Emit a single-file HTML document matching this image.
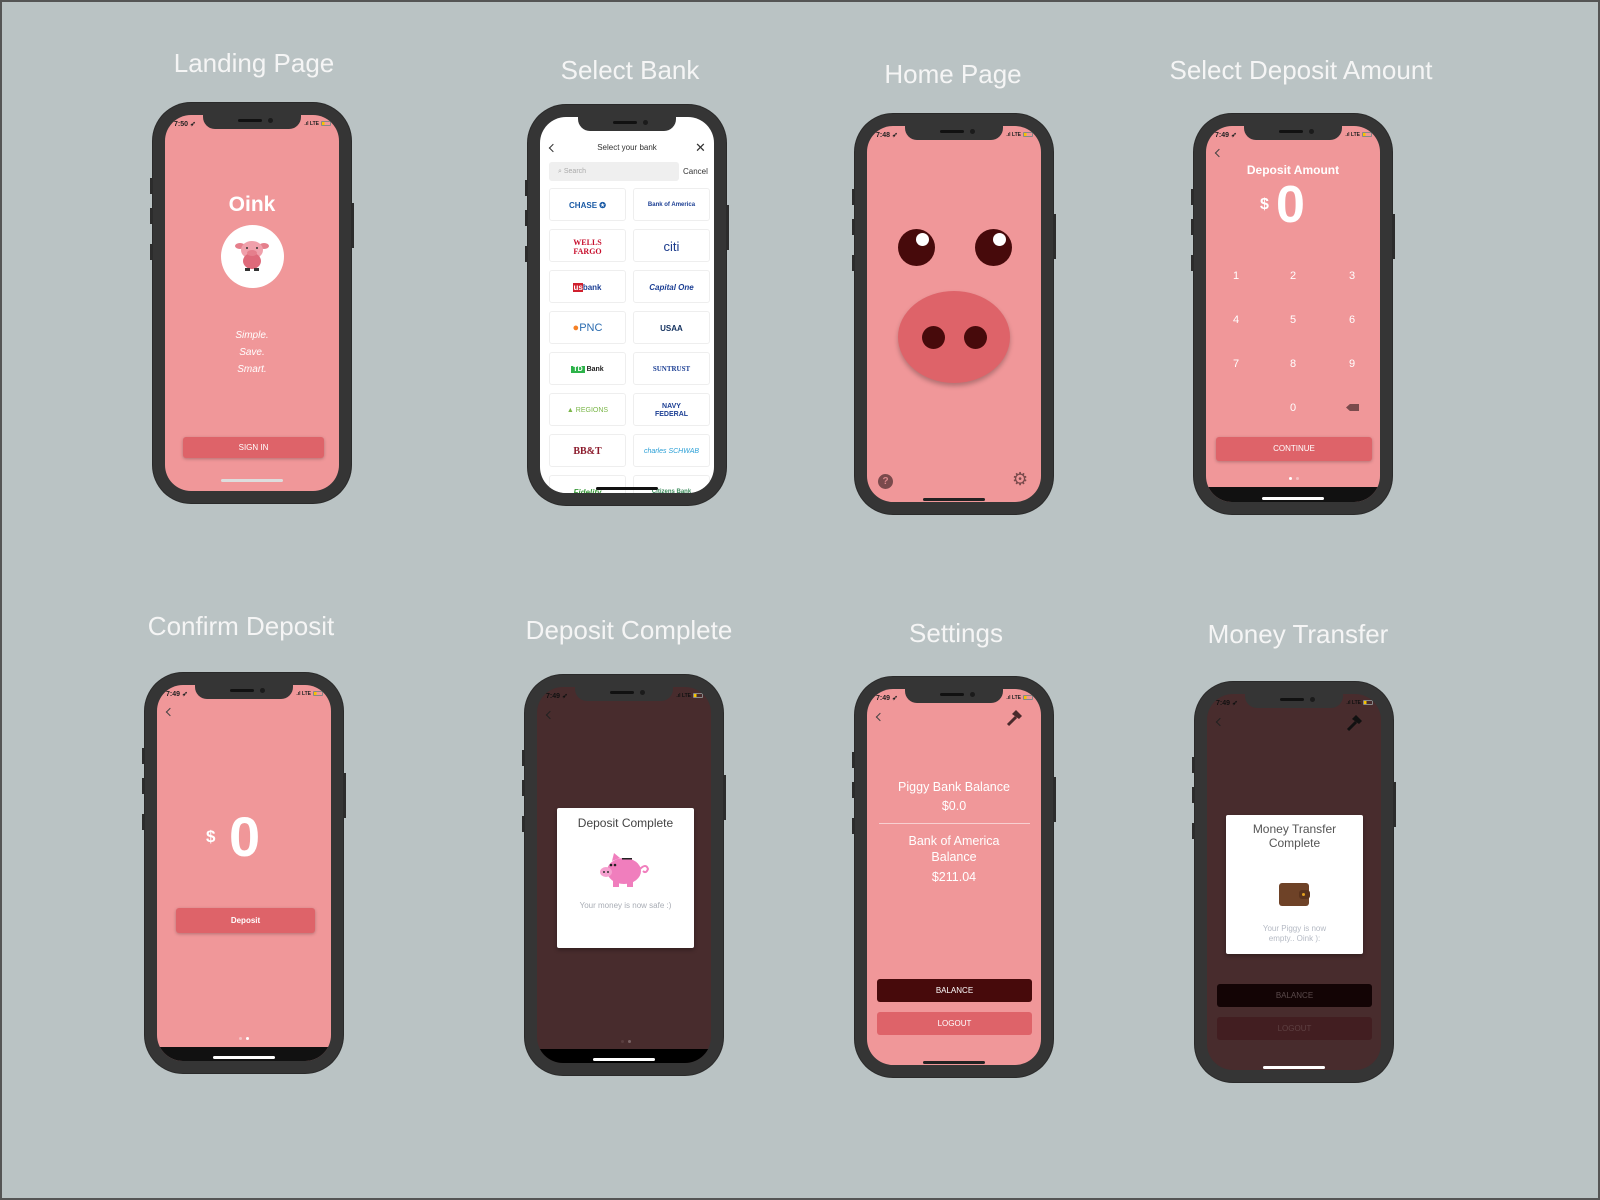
<!DOCTYPE html>
<html><head><meta charset="utf-8"><style>
*{margin:0;padding:0;box-sizing:border-box}
body{width:1600px;height:1200px;background:#bac3c4;position:relative;overflow:hidden;font-family:"Liberation Sans",sans-serif;border:2px solid #555}
.t{position:absolute;color:#f5f5f5;font-size:26px;transform:translateX(-50%);white-space:nowrap;line-height:1}
.ph{position:absolute;width:198px;height:400px;border-radius:38px;background:#353535;box-shadow:0 0 0 1px #2a2a2a}
.ph:before{content:"";position:absolute;left:-3px;top:75px;width:3px;height:16px;background:#2c2c2c;box-shadow:0 30px 0 #2c2c2c,0 66px 0 #2c2c2c}
.ph:after{content:"";position:absolute;right:-3px;top:100px;width:3px;height:45px;background:#2c2c2c}
.sc{position:absolute;left:12px;top:12px;width:174px;height:376px;border-radius:26px;overflow:hidden;background:#f09799}
.notch{position:absolute;left:38px;top:0;width:98px;height:14px;background:#353535;border-radius:0 0 12px 12px;z-index:5}
.notch:before{content:"";position:absolute;left:35px;top:4px;width:24px;height:3px;border-radius:2px;background:#111}
.notch:after{content:"";position:absolute;left:65px;top:3px;width:5px;height:5px;border-radius:50%;background:#1b1b1b}
.time{position:absolute;left:9px;top:5px;font-size:7px;font-weight:bold;color:#222}
.stat{position:absolute;right:8px;top:6px;font-size:5px;font-weight:bold;color:#222}
.stat i{display:inline-block;width:10px;height:5px;border:1px solid #888;border-radius:1px;vertical-align:middle;margin-left:2px;background:linear-gradient(90deg,#f5c400 30%,transparent 30%)}
.a{position:absolute}
.c{position:absolute;left:0;width:100%;text-align:center;color:#fff}
.btn{position:absolute;background:#de6369;color:#fff;font-size:8px;text-align:center;border-radius:3px;box-shadow:0 1px 3px rgba(0,0,0,.25)}
.hi{position:absolute;left:56px;width:62px;height:3px;border-radius:2px}
.chev{position:absolute;width:6px;height:6px;border-left:1px solid #444;border-bottom:1px solid #444;transform:rotate(45deg)}
.card{position:absolute;width:77px;height:33px;border:1px solid #eee;border-radius:3px;background:#fff;text-align:center;font-size:8px;line-height:33px;font-weight:bold}
.key{position:absolute;width:20px;margin-left:-10px;text-align:center;color:#fff;font-size:11px}
.pop{position:absolute;background:#fff;border-radius:2px;box-shadow:0 2px 4px rgba(0,0,0,.3)}
</style></head><body>

<div class="t" style="left:252px;top:48px">Landing Page</div>
<div class="t" style="left:628px;top:55px">Select Bank</div>
<div class="t" style="left:951px;top:59px">Home Page</div>
<div class="t" style="left:1299px;top:55px">Select Deposit Amount</div>
<div class="t" style="left:239px;top:611px">Confirm Deposit</div>
<div class="t" style="left:627px;top:615px">Deposit Complete</div>
<div class="t" style="left:954px;top:618px">Settings</div>
<div class="t" style="left:1296px;top:619px">Money Transfer</div>

<!-- P1 Landing -->
<div class="ph" style="left:151px;top:101px"><div class="sc">
<div class="notch"></div><div class="time">7:50 ➶</div><div class="stat">.ıl LTE<i></i></div>
<div class="c" style="top:78px;font-size:21px;font-weight:bold">Oink</div>
<div class="a" style="left:56px;top:110px;width:63px;height:63px;border-radius:50%;background:#fff"></div>
<svg class="a" style="left:68px;top:123px" width="38" height="36" viewBox="0 0 38 36"><ellipse cx="7" cy="8" rx="5" ry="3" fill="#e57f8c"/><ellipse cx="31" cy="8" rx="5" ry="3" fill="#e57f8c"/><ellipse cx="19" cy="12" rx="11" ry="9" fill="#f0a0ab"/><ellipse cx="19" cy="23" rx="9" ry="8" fill="#de6a7a"/><ellipse cx="19" cy="15" rx="5" ry="3" fill="#e57f8c"/><circle cx="14" cy="10" r="1" fill="#333"/><circle cx="24" cy="10" r="1" fill="#333"/><rect x="12" y="30" width="5" height="3" fill="#333"/><rect x="21" y="30" width="5" height="3" fill="#333"/></svg>
<div class="c" style="top:212px;font-size:10px;font-style:italic;line-height:17px">Simple.<br>Save.<br>Smart.</div>
<div class="btn" style="left:18px;top:322px;width:141px;height:21px;line-height:21px">SIGN IN</div>
<div class="hi" style="top:364px;background:#ddd"></div>
</div></div>

<!-- P2 Select bank -->
<div class="ph" style="left:526px;top:103px"><div class="sc" style="background:#fff">
<div class="notch"></div>
<div class="chev" style="left:10px;top:28px;border-color:#333"></div>
<div class="c" style="top:26px;font-size:8px;color:#333">Select your bank</div>
<div class="a" style="left:155px;top:23px;font-size:13px;color:#333">✕</div>
<div class="a" style="left:9px;top:45px;width:130px;height:19px;background:#efefef;border-radius:3px;font-size:7px;color:#aaa;line-height:19px;padding-left:9px">⌕ Search</div>
<div class="a" style="left:143px;top:50px;font-size:8px;color:#333">Cancel</div>
<div class="card" style="left:9px;top:71px;color:#1a5aa5">CHASE ✪</div>
<div class="card" style="left:93px;top:71px;color:#1c3f94;font-size:6px">Bank of America</div>
<div class="card" style="left:9px;top:112px;color:#c8102e;line-height:9px;padding-top:8px;font-family:'Liberation Serif',serif">WELLS<br>FARGO</div>
<div class="card" style="left:93px;top:112px;color:#1b3b8c;font-size:13px;font-weight:normal">citi</div>
<div class="card" style="left:9px;top:153px;color:#1c3f94"><span style="background:#d0202e;color:#fff">us</span>bank</div>
<div class="card" style="left:93px;top:153px;color:#1c3f94;font-style:italic">Capital One</div>
<div class="card" style="left:9px;top:194px;color:#2b6cb0;font-size:11px;font-weight:normal"><span style="color:#f58025">●</span>PNC</div>
<div class="card" style="left:93px;top:194px;color:#12305e">USAA</div>
<div class="card" style="left:9px;top:235px;color:#222;font-size:7px"><span style="background:#2db34a;color:#fff;padding:0 2px">TD</span> Bank</div>
<div class="card" style="left:93px;top:235px;color:#1c3f94;font-family:'Liberation Serif',serif;font-size:7px">SUNTRUST</div>
<div class="card" style="left:9px;top:276px;color:#7ab648;font-size:7px;font-weight:normal">▲ REGIONS</div>
<div class="card" style="left:93px;top:276px;color:#1c3f94;font-size:7px;line-height:8px;padding-top:9px">NAVY<br>FEDERAL</div>
<div class="card" style="left:9px;top:317px;color:#8b1a2b;font-family:'Liberation Serif',serif;font-size:10px">BB&amp;T</div>
<div class="card" style="left:93px;top:317px;color:#2a9fd6;font-style:italic;font-weight:normal;font-size:7px">charles SCHWAB</div>
<div class="card" style="left:9px;top:358px;color:#3a9a3a;font-style:italic">Fidelity</div>
<div class="card" style="left:93px;top:358px;color:#3a8a5a;font-size:6px">Citizens Bank</div>
<div class="hi" style="top:370px;background:#111"></div>
</div></div>

<!-- P3 Home -->
<div class="ph" style="left:853px;top:112px"><div class="sc">
<div class="notch"></div><div class="time">7:48 ➶</div><div class="stat">.ıl LTE<i></i></div>
<div class="a" style="left:31px;top:103px;width:37px;height:37px;border-radius:50%;background:#470a0b"></div>
<div class="a" style="left:49px;top:107px;width:13px;height:13px;border-radius:50%;background:#fff"></div>
<div class="a" style="left:108px;top:103px;width:37px;height:37px;border-radius:50%;background:#470a0b"></div>
<div class="a" style="left:126px;top:107px;width:13px;height:13px;border-radius:50%;background:#fff"></div>
<div class="a" style="left:31px;top:165px;width:112px;height:92px;border-radius:50%;background:#de6369;box-shadow:0 3px 5px rgba(0,0,0,.25)"></div>
<div class="a" style="left:55px;top:200px;width:23px;height:23px;border-radius:50%;background:#470a0b"></div>
<div class="a" style="left:97px;top:200px;width:23px;height:23px;border-radius:50%;background:#470a0b"></div>
<div class="a" style="left:11px;top:348px;width:15px;height:15px;border-radius:50%;background:#7a4a4c;color:#d9888c;font-size:10px;text-align:center;line-height:15px;font-weight:bold">?</div>
<div class="a" style="left:145px;top:343px;font-size:18px;color:#7a4a4c">⚙</div>
<div class="hi" style="top:372px;background:#222"></div>
</div></div>

<!-- P4 Deposit amount -->
<div class="ph" style="left:1192px;top:112px"><div class="sc">
<div class="notch"></div><div class="time">7:49 ➶</div><div class="stat">.ıl LTE<i></i></div>
<div class="chev" style="left:10px;top:24px"></div>
<div class="c" style="top:37px;font-size:12px;font-weight:bold">Deposit Amount</div>
<div class="a" style="left:54px;top:70px;font-size:16px;color:#fff;font-weight:bold">$</div>
<div class="a" style="left:70px;top:53px;font-size:52px;color:#fff;font-weight:bold;line-height:1">0</div>
<div class="key" style="left:30px;top:144px">1</div><div class="key" style="left:87px;top:144px">2</div><div class="key" style="left:146px;top:144px">3</div>
<div class="key" style="left:30px;top:188px">4</div><div class="key" style="left:87px;top:188px">5</div><div class="key" style="left:146px;top:188px">6</div>
<div class="key" style="left:30px;top:232px">7</div><div class="key" style="left:87px;top:232px">8</div><div class="key" style="left:146px;top:232px">9</div>
<div class="key" style="left:87px;top:276px">0</div>
<div class="a" style="left:140px;top:278px;width:13px;height:7px;background:#7a4a4c;clip-path:polygon(30% 0,100% 0,100% 100%,30% 100%,0 50%)"></div>
<div class="btn" style="left:10px;top:311px;width:156px;height:24px;line-height:24px">CONTINUE</div>
<div class="a" style="left:83px;top:351px;width:3px;height:3px;border-radius:50%;background:#fff"></div>
<div class="a" style="left:90px;top:351px;width:3px;height:3px;border-radius:50%;background:#f5c0c2"></div>
<div class="a" style="left:0;top:361px;width:174px;height:15px;background:#111"></div>
<div class="hi" style="top:371px;background:#fff"></div>
</div></div>

<!-- P5 Confirm -->
<div class="ph" style="left:143px;top:671px"><div class="sc">
<div class="notch"></div><div class="time">7:49 ➶</div><div class="stat">.ıl LTE<i></i></div>
<div class="chev" style="left:10px;top:24px"></div>
<div class="a" style="left:49px;top:142px;font-size:17px;color:#fff;font-weight:bold">$</div>
<div class="a" style="left:72px;top:124px;font-size:56px;color:#fff;font-weight:bold;line-height:1">0</div>
<div class="btn" style="left:19px;top:223px;width:139px;height:25px;line-height:25px;font-weight:bold">Deposit</div>
<div class="a" style="left:82px;top:352px;width:3px;height:3px;border-radius:50%;background:#f5c0c2"></div>
<div class="a" style="left:89px;top:352px;width:3px;height:3px;border-radius:50%;background:#fff"></div>
<div class="a" style="left:0;top:362px;width:174px;height:14px;background:#111"></div>
<div class="hi" style="top:371px;background:#fff"></div>
</div></div>

<!-- P6 Deposit complete -->
<div class="ph" style="left:523px;top:673px"><div class="sc" style="background:#482c2d">
<div class="notch"></div><div class="time" style="color:#111">7:49 ➶</div><div class="stat" style="color:#111">.ıl LTE<i></i></div>
<div class="chev" style="left:10px;top:25px;border-color:#222"></div>
<div class="pop" style="left:20px;top:121px;width:137px;height:140px">
<div class="c" style="top:8px;font-size:12px;color:#444">Deposit Complete</div>
<svg class="a" style="left:43px;top:43px" width="52" height="38" viewBox="0 0 52 38"><ellipse cx="24" cy="20" rx="17" ry="13" fill="#f07ebd"/><path d="M12 10 L14 2 L20 7Z" fill="#f07ebd"/><ellipse cx="6" cy="21" rx="6" ry="5" fill="#f5a0cf"/><circle cx="4" cy="21" r="1" fill="#333"/><circle cx="8" cy="21" r="1" fill="#333"/><circle cx="11" cy="14" r="1.3" fill="#222"/><circle cx="15" cy="14" r="1.3" fill="#222"/><rect x="22" y="7" width="10" height="1.5" fill="#222"/><rect x="13" y="28" width="6" height="8" fill="#f07ebd"/><rect x="27" y="28" width="6" height="8" fill="#f07ebd"/><path d="M40 18 q6 -6 8 0 q-2 5 -5 2" stroke="#f07ebd" stroke-width="2" fill="none"/></svg>
<div class="c" style="top:93px;font-size:8px;color:#a9adb5">Your money is now safe :)</div>
</div>
<div class="a" style="left:84px;top:353px;width:3px;height:3px;border-radius:50%;background:#5a3e3f"></div>
<div class="a" style="left:91px;top:353px;width:3px;height:3px;border-radius:50%;background:#7a6465"></div>
<div class="a" style="left:0;top:362px;width:174px;height:14px;background:#000"></div>
<div class="hi" style="top:371px;background:#fff"></div>
</div></div>

<!-- P7 Settings -->
<div class="ph" style="left:853px;top:675px"><div class="sc">
<div class="notch"></div><div class="time">7:49 ➶</div><div class="stat">.ıl LTE<i></i></div>
<div class="chev" style="left:10px;top:25px"></div>
<svg class="a" style="left:139px;top:20px" width="18" height="18" viewBox="0 0 18 18"><path d="M2 16 L10 8" stroke="#4a2a2c" stroke-width="3"/><path d="M6 5 L10 1 L16 7 L13 10 Z" fill="#4a2a2c"/></svg>
<div class="c" style="top:91px;font-size:12.5px">Piggy Bank Balance</div>
<div class="c" style="top:110px;font-size:12.5px">$0.0</div>
<div class="a" style="left:12px;top:134px;width:151px;height:1px;background:#f8d0d1"></div>
<div class="c" style="top:144px;font-size:12.5px;line-height:16px">Bank of America<br>Balance</div>
<div class="c" style="top:181px;font-size:12.5px">$211.04</div>
<div class="btn" style="left:10px;top:290px;width:155px;height:23px;line-height:23px;background:#470a0b;box-shadow:none">BALANCE</div>
<div class="btn" style="left:10px;top:323px;width:155px;height:23px;line-height:23px;box-shadow:none">LOGOUT</div>
<div class="hi" style="top:372px;background:#222"></div>
</div></div>

<!-- P8 Money transfer -->
<div class="ph" style="left:1193px;top:680px"><div class="sc" style="background:#482c2d">
<div class="notch"></div><div class="time" style="color:#111">7:49 ➶</div><div class="stat" style="color:#111">.ıl LTE<i></i></div>
<div class="chev" style="left:10px;top:25px;border-color:#222"></div>
<svg class="a" style="left:139px;top:20px" width="18" height="18" viewBox="0 0 18 18"><path d="M2 16 L10 8" stroke="#111" stroke-width="3"/><path d="M6 5 L10 1 L16 7 L13 10 Z" fill="#111"/></svg>
<div class="pop" style="left:19px;top:121px;width:137px;height:139px">
<div class="c" style="top:7px;font-size:12px;color:#555;line-height:14px">Money Transfer<br>Complete</div>
<div class="a" style="left:53px;top:68px;width:30px;height:23px;background:#6e4227;border-radius:3px"></div>
<div class="a" style="left:73px;top:75px;width:11px;height:9px;background:#5a331d;border-radius:3px"></div>
<div class="a" style="left:76px;top:78px;width:3px;height:3px;border-radius:50%;background:#e0a020"></div>
<div class="c" style="top:109px;font-size:8px;color:#b5bac4;line-height:10px">Your Piggy is now<br>empty.. Oink ):</div>
</div>
<div class="btn" style="left:10px;top:290px;width:155px;height:23px;line-height:23px;background:#130405;color:#5a4a4b;box-shadow:none">BALANCE</div>
<div class="btn" style="left:10px;top:323px;width:155px;height:23px;line-height:23px;background:#421e21;color:#5e4042;box-shadow:none">LOGOUT</div>
<div class="hi" style="top:372px;background:#fff"></div>
</div></div>

</body></html>
